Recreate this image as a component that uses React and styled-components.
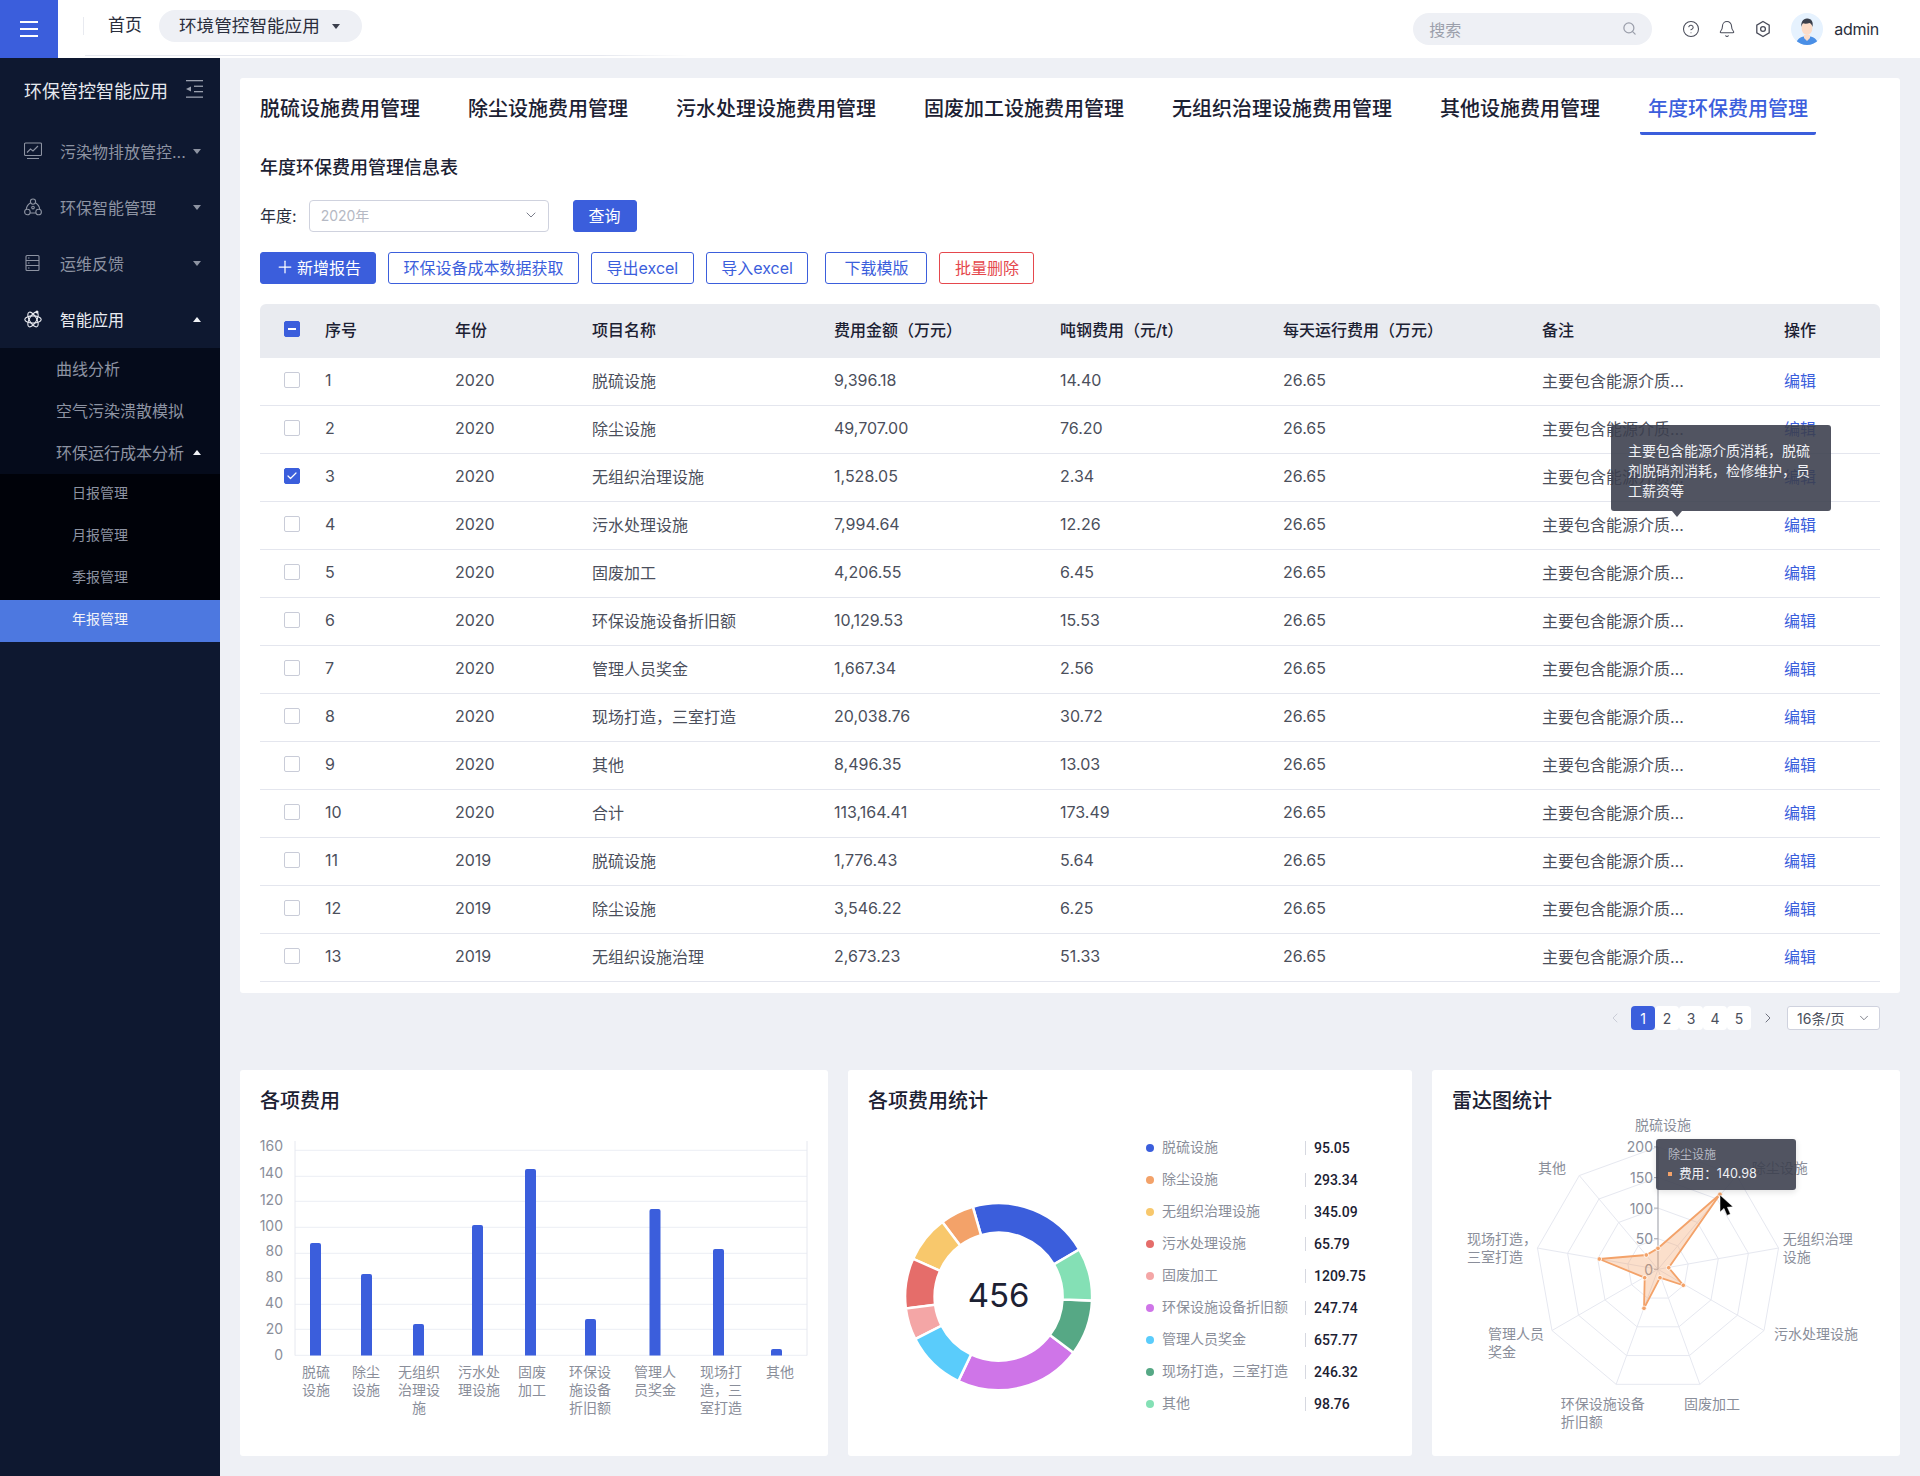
import styled, { createGlobalStyle } from "styled-components";
import { Search, Bell, CircleHelp, Plus, ChevronDown, ChevronLeft, ChevronRight, Check } from "lucide-react";

const BLUE = "#3b5edc";
const ORANGE = "#f3a269";

const tabs = [
    "脱硫设施费用管理",
    "除尘设施费用管理",
    "污水处理设施费用管理",
    "固废加工设施费用管理",
    "无组织治理设施费用管理",
    "其他设施费用管理",
    "年度环保费用管理",
];

const rows = [
    [1, 2020, "脱硫设施", "9,396.18", "14.40"],
    [2, 2020, "除尘设施", "49,707.00", "76.20"],
    [3, 2020, "无组织治理设施", "1,528.05", "2.34"],
    [4, 2020, "污水处理设施", "7,994.64", "12.26"],
    [5, 2020, "固废加工", "4,206.55", "6.45"],
    [6, 2020, "环保设施设备折旧额", "10,129.53", "15.53"],
    [7, 2020, "管理人员奖金", "1,667.34", "2.56"],
    [8, 2020, "现场打造，三室打造", "20,038.76", "30.72"],
    [9, 2020, "其他", "8,496.35", "13.03"],
    [10, 2020, "合计", "113,164.41", "173.49"],
    [11, 2019, "脱硫设施", "1,776.43", "5.64"],
    [12, 2019, "除尘设施", "3,546.22", "6.25"],
    [13, 2019, "无组织设施治理", "2,673.23", "51.33"],
];

const REMARK = "主要包含能源介质消耗，脱硫剂脱硝剂消耗，检修维护，员工薪资等";

const bars = [
    { x: 310, top: 1243, label: ["脱硫", "设施"], cx: 316 },
    { x: 361, top: 1274, label: ["除尘", "设施"], cx: 366 },
    { x: 413, top: 1324, label: ["无组织", "治理设", "施"], cx: 419 },
    { x: 472, top: 1225, label: ["污水处", "理设施"], cx: 479 },
    { x: 525, top: 1169, label: ["固废", "加工"], cx: 532 },
    { x: 585, top: 1319, label: ["环保设", "施设备", "折旧额"], cx: 590 },
    { x: 649.5, top: 1209, label: ["管理人", "员奖金"], cx: 655 },
    { x: 713, top: 1249, label: ["现场打", "造，三", "室打造"], cx: 721 },
    { x: 771, top: 1349, label: ["其他"], cx: 780 },
];

const yTicks = [
    ["160", 1150.3, 1145],
    ["140", 1176.3, 1172],
    ["120", 1201.3, 1199],
    ["100", 1227.3, 1225],
    ["80", 1253.3, 1250],
    ["80", 1278.3, 1276],
    ["40", 1304.3, 1302],
    ["20", 1329.3, 1328],
    ["0", 1355.3, 1354],
];

const costs = [
    { name: "脱硫设施", value: "95.05", color: BLUE, from: 344, to: 419.7 },
    { name: "除尘设施", value: "293.34", color: ORANGE, from: 323, to: 344 },
    { name: "无组织治理设施", value: "345.09", color: "#f8c86c", from: 293.9, to: 323 },
    { name: "污水处理设施", value: "65.79", color: "#e56d6a", from: 262.7, to: 293.9 },
    { name: "固废加工", value: "1209.75", color: "#f4a6a6", from: 243, to: 262.7 },
    { name: "环保设施设备折旧额", value: "247.74", color: "#cf75e8", from: 126.8, to: 205.5 },
    { name: "管理人员奖金", value: "657.77", color: "#5accfb", from: 205.5, to: 243 },
    { name: "现场打造，三室打造", value: "246.32", color: "#56a885", from: 92.4, to: 126.8 },
    { name: "其他", value: "98.76", color: "#84e0b5", from: 59.7, to: 92.4 },
];

const polar = (cx, cy, r, deg) => {
    const a = (deg * Math.PI) / 180;
    return [cx + r * Math.sin(a), cy - r * Math.cos(a)];
};

const arcPath = (cx, cy, r0, r1, from, to) => {
    const [ax, ay] = polar(cx, cy, r1, from);
    const [bx, by] = polar(cx, cy, r1, to);
    const [c, d] = polar(cx, cy, r0, to);
    const [e, f] = polar(cx, cy, r0, from);
    const large = to - from > 180 ? 1 : 0;
    return `M${ax} ${ay}A${r1} ${r1} 0 ${large} 1 ${bx} ${by}L${c} ${d}A${r0} ${r0} 0 ${large} 0 ${e} ${f}Z`;
};

const RADAR_X = 1658;
const RADAR_Y = 1269.3;
const RADAR_STEP = 30.6;
const angles = Array.from({ length: 9 }, (_, i) => i * 40);

const ringPoints = (r) =>
    angles.map((a) => polar(RADAR_X, RADAR_Y, r, a).join(",")).join(" ");

const radarData = [
    [1658, 1248.3],
    [1720, 1194.3],
    [1668.7, 1267.7],
    [1683.3, 1285.3],
    [1660, 1277.7],
    [1644, 1308.3],
    [1644.7, 1277.7],
    [1599.3, 1259],
    [1646.3, 1255],
];

const radarLabels = [
    { x: 1635, y: 1124, lines: ["脱硫设施"] },
    { x: 1751.7, y: 1167, lines: ["除尘设施"] },
    { x: 1782.7, y: 1238, lines: ["无组织治理", "设施"] },
    { x: 1774, y: 1333, lines: ["污水处理设施"] },
    { x: 1684, y: 1403, lines: ["固废加工"] },
    { x: 1560.7, y: 1403, lines: ["环保设施设备", "折旧额"] },
    { x: 1488, y: 1333, lines: ["管理人员", "奖金"] },
    { x: 1467, y: 1238, lines: ["现场打造，", "三室打造"] },
    { x: 1538, y: 1167, lines: ["其他"] },
];

const GlobalStyle = createGlobalStyle`
    * { box-sizing: border-box; }
    html, body { margin: 0; padding: 0; }
    body {
        font-family: Inter, "Noto Sans CJK SC", sans-serif;
        background: #eef0f5;
        color: #1c2133;
    }
`;

const Page = styled.div`
    width: 1920px;
    height: 1476px;
    display: flex;
    flex-direction: column;
    overflow: hidden;
`;

const Header = styled.header`
    height: 58px;
    flex: none;
    background: #fff;
    display: flex;
    align-items: center;
    position: relative;
    padding-right: 41px;
    &::after {
        content: "";
        position: absolute;
        left: 85px;
        top: 55px;
        width: 607px;
        height: 1px;
        background: linear-gradient(90deg, #e6e8ef, #e6e8ef 85%, #fff);
    }
`;

const MenuButton = styled.div`
    width: 58px;
    height: 58px;
    background: ${BLUE};
    display: flex;
    align-items: center;
    justify-content: center;
`;

const Breadcrumb = styled.div`
    display: flex;
    align-items: center;
    margin-bottom: 6px;
`;

const Divider = styled.i`
    width: 1px;
    height: 18px;
    background: #e8eaf0;
    margin: 0 24px 0 25px;
`;

const Crumb = styled.span`
    font-size: 17px;
    line-height: 24px;
    margin-bottom: 2px;
    color: #2a2e3c;
`;

const CrumbPill = styled.div`
    margin-left: 17px;
    width: 203px;
    height: 32px;
    border-radius: 16px;
    background: #eef0f5;
    display: flex;
    align-items: center;
    padding: 0 0 3px 20px;
    gap: 12px;
    font-size: 17.6px;
    color: #2a2e3c;
    &::after {
        content: "";
        margin-top: 3px;
        border: 4px solid transparent;
        border-top: 5px solid #3a3e4c;
        border-bottom: 0;
    }
`;

const HeaderRight = styled.div`
    margin-left: auto;
    display: flex;
    align-items: center;
`;

const SearchBox = styled.div`
    width: 239px;
    height: 32px;
    border-radius: 16px;
    background: #eef0f5;
    display: flex;
    align-items: center;
    justify-content: space-between;
    padding: 0 15px 1px 16px;
    font-size: 16px;
    color: #9b9fab;
    margin-right: 30px;
`;

const IconGroup = styled.div`
    display: flex;
    gap: 18px;
    margin-right: 19px;
    color: #4a4d5a;
`;

const UserName = styled.span`
    margin-left: 11px;
    font-size: 16px;
    letter-spacing: -0.3px;
    color: #2a2e3c;
`;

const Body = styled.div`
    flex: 1;
    display: flex;
    min-height: 0;
`;

const Sidebar = styled.aside`
    width: 220px;
    flex: none;
    background: #0e1830;
`;

const SideTitle = styled.div`
    height: 66px;
    padding: 22px 17px 0 24px;
    display: flex;
    justify-content: space-between;
    align-items: flex-start;
    font-size: 18px;
    line-height: 24px;
    color: #e6e8ee;
`;

const SideItem = styled.div`
    height: 56px;
    display: flex;
    align-items: center;
    padding: 0 19.5px 2px 24px;
    font-size: 16px;
    color: ${(p) => (p.$active ? "#e9ebf1" : "#8d93a2")};
`;

const SideIcon = styled.span`
    width: 18px;
    height: 18px;
    margin-right: 18px;
    display: flex;
`;

const Caret = styled.i`
    margin-left: auto;
    width: 0;
    height: 0;
    border-left: 4px solid transparent;
    border-right: 4px solid transparent;
    ${(p) =>
        p.$up
            ? "border-bottom: 5px solid #f0f2f6;"
            : "border-top: 5px solid #8d93a2;"}
`;

const SubMenu = styled.div`
    background: #050b1b;
`;

const SubItem = styled.div`
    height: 42px;
    display: flex;
    align-items: center;
    padding: 0 19.5px 2px 56px;
    font-size: 16px;
    color: #8d93a2;
`;

const LeafMenu = styled.div`
    background: #000209;
`;

const LeafItem = styled.div`
    height: 42px;
    display: flex;
    align-items: center;
    padding: 0 0 6px 72px;
    font-size: 14px;
    color: ${(p) => (p.$active ? "#f1f3f8" : "#8d93a2")};
    background: ${(p) => (p.$active ? "#4d78e0" : "transparent")};
`;

const Main = styled.main`
    flex: 1;
    min-width: 0;
    padding: 20px;
`;

const TableCard = styled.section`
    height: 915px;
    background: #fff;
    border-radius: 3px;
    padding: 0 20px;
`;

const Tabs = styled.div`
    display: flex;
    gap: 32px;
    margin-left: -8px;
`;

const Tab = styled.div`
    padding: 19px 8px 11px;
    font-size: 20px;
    line-height: 24px;
    font-weight: 500;
    white-space: nowrap;
    color: ${(p) => (p.$active ? BLUE : "#1c2133")};
    border-bottom: 3px solid ${(p) => (p.$active ? BLUE : "transparent")};
    border-radius: 0 0 2px 2px;
`;

const SectionTitle = styled.h2`
    margin: 21px 0 0;
    font-size: 18px;
    line-height: 24px;
    font-weight: 500;
    color: #1c2133;
`;

const FilterRow = styled.div`
    margin-top: 20px;
    height: 32px;
    display: flex;
    align-items: center;
    font-size: 16px;
    color: #2a2e3c;
`;

const FilterLabel = styled.span`
    margin-bottom: 3px;
`;

const YearSelect = styled.div`
    margin-left: 12px;
    width: 240px;
    height: 32px;
    border: 1px solid #cfd2de;
    border-radius: 4px;
    display: flex;
    align-items: center;
    justify-content: space-between;
    padding: 0 9px 2px 11px;
    font-size: 14px;
    color: #b5b9c4;
`;

const SelectArrow = styled(ChevronDown)`
    color: #666a78;
`;

const Toolbar = styled.div`
    margin-top: 20px;
    display: flex;
    gap: 12px;
`;

const Button = styled.button`
    height: 32px;
    padding: 0 ${(p) => p.$pad || 14.5}px 2px;
    margin-left: ${(p) => p.$offset || 0}px;
    border-radius: 3px;
    font: inherit;
    font-size: 16px;
    display: flex;
    align-items: center;
    gap: ${(p) => p.$gap || 4}px;
    white-space: nowrap;
    cursor: pointer;
    border: 1px solid ${(p) => (p.$danger ? "#e5484d" : BLUE)};
    color: ${(p) => (p.$primary ? "#fff" : p.$danger ? "#e5484d" : BLUE)};
    background: ${(p) => (p.$primary ? BLUE : "#fff")};
`;

const QueryButton = styled(Button)`
    margin-left: 24px;
    width: 64px;
    justify-content: center;
`;

const Table = styled.div`
    margin-top: 20px;
    position: relative;
`;

const columns = "65px 130px 137px 242px 226px 223px 259px 242px 1fr";

const HeadRow = styled.div`
    height: 54px;
    display: grid;
    grid-template-columns: ${columns};
    align-items: center;
    padding-bottom: 5px;
    background: #e9ebf0;
    border-radius: 6px 6px 0 0;
    font-size: 16px;
    font-weight: 500;
    color: #1c2133;
`;

const Row = styled.div`
    height: 48px;
    display: grid;
    grid-template-columns: ${columns};
    align-items: center;
    padding-bottom: 3px;
    border-bottom: 1px solid #e4e6ee;
    font-size: 16px;
    color: #4b4f5c;
`;

const CheckCell = styled.div`
    padding-left: 24px;
    display: flex;
`;

const Box = styled.span`
    width: 16px;
    height: 16px;
    border-radius: 2px;
    display: flex;
    align-items: center;
    justify-content: center;
    color: #fff;
    border: 1px solid ${(p) => (p.$on ? BLUE : "#c9ccd8")};
    background: ${(p) => (p.$on ? BLUE : "#fff")};
`;

const Dash = styled.i`
    width: 8px;
    height: 2px;
    background: #fff;
`;

const Remark = styled.div`
    width: 147px;
    white-space: nowrap;
    overflow: hidden;
    text-overflow: ellipsis;
`;

const EditLink = styled.a`
    color: ${BLUE};
`;

const RowTip = styled.div`
    position: absolute;
    left: 1351px;
    top: 121px;
    width: 220px;
    padding: 16px 17px 10px;
    border-radius: 3px;
    background: rgba(60, 63, 78, 0.89);
    color: #f0f1f5;
    font-size: 14px;
    line-height: 20px;
    &::after {
        content: "";
        position: absolute;
        left: 61px;
        top: 100%;
        border: 5px solid transparent;
        border-top: 6px solid rgba(60, 63, 78, 0.89);
        border-bottom: 0;
    }
`;

const Pager = styled.div`
    margin-top: 13px;
    height: 24px;
    padding-right: 20px;
    display: flex;
    justify-content: flex-end;
    align-items: center;
    font-size: 14px;
    color: #4b4f5c;
`;

const PageNum = styled.div`
    width: 24px;
    height: 24px;
    border-radius: 4px;
    display: flex;
    align-items: center;
    justify-content: center;
    background: ${(p) => (p.$active ? BLUE : "#fff")};
    color: ${(p) => (p.$active ? "#fff" : "#4b4f5c")};
`;

const PageArrow = styled.div`
    display: flex;
    color: ${(p) => (p.$off ? "#c4c7d2" : "#5a5e6c")};
    margin: ${(p) => (p.$off ? "0 8px 0 0" : "0 11px 0 9px")};
`;

const SizeSelect = styled.div`
    width: 93px;
    height: 24px;
    background: #fff;
    border: 1px solid #cfd2de;
    border-radius: 3px;
    display: flex;
    align-items: center;
    justify-content: space-between;
    padding: 0 8px 0 9px;
`;

const Charts = styled.div`
    margin-top: 40px;
    display: grid;
    grid-template-columns: 588px 564px 468px;
    gap: 20px;
`;

const Card = styled.section`
    height: 386px;
    background: #fff;
    border-radius: 3px;
    position: relative;
`;

const CardTitle = styled.h3`
    margin: 0;
    padding: 19px 0 0 20px;
    height: 42px;
    font-size: 20px;
    line-height: 24px;
    font-weight: 500;
    color: #1c2133;
`;

const DonutBody = styled.div`
    display: flex;
`;

const ChartSvg = styled.svg`
    display: block;
    flex: none;
`;

const AxisText = styled.text`
    font-size: 14px;
    fill: #8a8e9a;
`;

const CenterText = styled.text`
    font-size: 33px;
    fill: #1c2133;
`;

const Legend = styled.div`
    padding-top: 20px;
`;

const LegendRow = styled.div`
    height: 32px;
    display: flex;
    align-items: center;
    font-size: 14px;
    color: #8a8e9a;
`;

const LegendDot = styled.i`
    width: 8px;
    height: 8px;
    border-radius: 50%;
    margin-right: 8px;
    background: ${(p) => p.$color};
`;

const LegendName = styled.span`
    width: 143px;
    margin-top: -5px;
`;

const LegendValue = styled.span`
    border-left: 1px solid #d6d8e0;
    padding-left: 8px;
    line-height: 14px;
    font-family: Roboto, sans-serif;
    font-weight: 500;
    color: #1c2133;
`;

const ChartTip = styled.div`
    position: absolute;
    left: 224px;
    top: 69px;
    width: 140px;
    height: 51px;
    padding: 8px 12px;
    border-radius: 3px;
    background: rgba(60, 63, 78, 0.89);
    box-shadow: 0 2px 6px rgba(0, 0, 0, 0.12);
    font-size: 12px;
    line-height: 16px;
    color: #b7bac4;
`;

const TipLine = styled.div`
    margin-top: 2px;
    display: flex;
    align-items: center;
    color: #f0f1f5;
    font-size: 12.6px;
    line-height: 18px;
    white-space: nowrap;
    &::before {
        content: "";
        width: 4px;
        height: 4px;
        margin-right: 7px;
        background: ${ORANGE};
    }
`;

const MenuIcon = () => (
    <svg width="18" height="18" viewBox="0 0 18 18" fill="#fff">
        <rect y="1" width="18" height="2" />
        <rect y="8" width="18" height="2" />
        <rect y="15" width="18" height="2" />
    </svg>
);

const HexIcon = () => (
    <svg width="18" height="18" viewBox="0 0 18 18" fill="none" stroke="currentColor" strokeWidth="1.3">
        <path d="M9 1.5l6.2 3.6v7.8L9 16.5l-6.2-3.6V5.1z" />
        <circle cx="9" cy="9" r="2.4" />
    </svg>
);

const Avatar = () => (
    <svg width="32" height="32" viewBox="0 0 32 32">
        <clipPath id="face-clip">
            <circle cx="16" cy="16" r="16" />
        </clipPath>
        <g clipPath="url(#face-clip)">
            <rect width="32" height="32" fill="#e6f2fe" />
            <path d="M5 32c0-5 4-8 8-8.5h6c4 .5 8 3.5 8 8.5z" fill="#4a8fe6" />
            <path d="M13 22h6v3l-3 3-3-3z" fill="#fbdcc8" />
            <ellipse cx="16" cy="15" rx="5.4" ry="7" fill="#fbdcc8" />
            <path d="M10.5 14c-1-5 2-9 6-8.5 4 0 6 3.5 5 8.5-.5-2-1.5-3.5-3-4-2 .8-5 .8-6.5.3-.8 1-1.3 2-1.5 3.7z" fill="#3a3f4b" />
        </g>
    </svg>
);

const CollapseIcon = () => (
    <svg width="17" height="18" viewBox="0 0 17 18" fill="#9aa0ae">
        <rect y="0" width="17" height="1.3" />
        <rect x="8" y="5.6" width="9" height="1.3" />
        <rect x="8" y="11" width="9" height="1.3" />
        <rect y="16.5" width="17" height="1.3" />
        <path d="M0 9l5-2.5v5z" />
    </svg>
);

const MonitorIcon = () => (
    <svg width="18" height="18" viewBox="0 0 18 18" fill="none" stroke="#8d93a2" strokeWidth="1.1">
        <rect x=".5" y="1" width="17" height="12.5" rx="1" />
        <path d="M3 10.5l3.5-3.5 2.5 2 5-5M3 16.5h12" />
    </svg>
);

const CirclesIcon = () => (
    <svg width="18" height="18" viewBox="0 0 18 18" fill="none" stroke="#8d93a2" strokeWidth="1.1">
        <circle cx="9" cy="3.6" r="2.6" />
        <circle cx="3.4" cy="14" r="2.8" />
        <circle cx="14.6" cy="14" r="2.8" />
        <circle cx="9" cy="9.6" r="1.3" />
        <path d="M6.6 4.8C4 6.5 2.5 8.7 2.3 11.3M11.4 4.8c2.6 1.7 4.1 3.9 4.3 6.5M6.2 15h5.6" />
    </svg>
);

const ListIcon = () => (
    <svg width="18" height="18" viewBox="0 0 18 18" fill="none" stroke="#8d93a2" strokeWidth="1.1">
        <rect x="2" y="1.5" width="13" height="15" rx="1" />
        <path d="M2 6.5h13M2 11.5h13M4 4h1.5M4 9h1.5M4 14h1.5" />
    </svg>
);

const AtomIcon = () => (
    <svg width="18" height="18" viewBox="0 0 18 18" fill="none" stroke="#e9ebf1" strokeWidth="1.1">
        <ellipse cx="9" cy="9.5" rx="8.2" ry="3.6" />
        <ellipse cx="9" cy="9.5" rx="8.2" ry="3.6" transform="rotate(60 9 9.5)" />
        <ellipse cx="9" cy="9.5" rx="8.2" ry="3.6" transform="rotate(120 9 9.5)" />
        <circle cx="13" cy="2" r="1.5" fill="#e9ebf1" stroke="none" />
    </svg>
);

const BarChart = () => (
    <ChartSvg width="588" height="344" viewBox="240 1112 588 344">
        {yTicks.map(([label, line, text], i) => (
            <g key={i}>
                <line x1="295" x2="807" y1={line} y2={line} stroke="#eceef4" />
                <AxisText x="283" y={text} textAnchor="end" dominantBaseline="central">
                    {label}
                </AxisText>
            </g>
        ))}
        <line x1="295" x2="295" y1="1141" y2="1355.5" stroke="#e6e8ef" />
        <line x1="807" x2="807" y1="1141" y2="1355.5" stroke="#e6e8ef" />
        {bars.map((bar) => (
            <g key={bar.x}>
                <path
                    d={`M${bar.x} 1355.5V${bar.top + 2}q0-2 2-2h7q2 0 2 2V1355.5z`}
                    fill={BLUE}
                />
                {bar.label.map((text, i) => (
                    <AxisText key={i} x={bar.cx} y={1371 + i * 18} textAnchor="middle" dominantBaseline="central">
                        {text}
                    </AxisText>
                ))}
            </g>
        ))}
    </ChartSvg>
);

const DonutChart = () => (
    <ChartSvg width="298" height="344" viewBox="848 1112 298 344">
        {costs.map((item) => (
            <path
                key={item.name}
                d={arcPath(998.6, 1296.7, 64, 93.5, item.from, item.to)}
                fill={item.color}
                stroke="#fff"
                strokeWidth="2.5"
            />
        ))}
        <CenterText x="998.6" y="1295" textAnchor="middle" dominantBaseline="central">
            456
        </CenterText>
    </ChartSvg>
);

const RadarChart = () => (
    <ChartSvg width="468" height="344" viewBox="1432 1112 468 344">
        {[1, 2, 3, 4].map((k) => (
            <polygon key={k} points={ringPoints(k * RADAR_STEP)} fill="none" stroke="#e6e8f0" />
        ))}
        {angles.slice(1).map((a) => {
            const [x, y] = polar(RADAR_X, RADAR_Y, 4 * RADAR_STEP, a);
            return <line key={a} x1={RADAR_X} y1={RADAR_Y} x2={x} y2={y} stroke="#e6e8f0" />;
        })}
        <line x1={RADAR_X} x2={RADAR_X} y1={RADAR_Y} y2={RADAR_Y - 4 * RADAR_STEP} stroke="#a9abb3" strokeWidth="1.2" />
        {["0", "50", "100", "150", "200"].map((label, i) => (
            <g key={label}>
                <line x1="1654" x2={RADAR_X} y1={RADAR_Y - i * RADAR_STEP} y2={RADAR_Y - i * RADAR_STEP} stroke="#a9abb3" />
                <AxisText x="1653" y={RADAR_Y - i * RADAR_STEP} textAnchor="end" dominantBaseline="central">
                    {label}
                </AxisText>
            </g>
        ))}
        {radarLabels.map((item) =>
            item.lines.map((text, i) => (
                <AxisText key={text} x={item.x} y={item.y + i * 18} dominantBaseline="central">
                    {text}
                </AxisText>
            ))
        )}
        <polygon
            points={radarData.map((p) => p.join(",")).join(" ")}
            fill="rgba(243,162,105,0.35)"
            stroke={ORANGE}
            strokeWidth="1.8"
            strokeLinejoin="miter"
        />
        {radarData.map(([x, y], i) => (
            <circle key={i} cx={x} cy={y} r="2.3" fill={ORANGE} stroke="#fff" strokeWidth="0.8" />
        ))}
        <path d="M1720 1195v17l4-3.6 3 7 3.4-1.4-3-6.8 5.6-.4z" fill="#000" stroke="#fff" strokeWidth=".5" />
    </ChartSvg>
);

const App = () => {
    return (
        <Page>
            <GlobalStyle />
            <Header>
                <MenuButton>
                    <MenuIcon />
                </MenuButton>
                <Breadcrumb>
                    <Divider />
                    <Crumb>首页</Crumb>
                    <CrumbPill>环境管控智能应用</CrumbPill>
                </Breadcrumb>
                <HeaderRight>
                    <SearchBox>
                        搜索
                        <Search size={15} color="#9b9fab" />
                    </SearchBox>
                    <IconGroup>
                        <CircleHelp size={18} strokeWidth={1.4} />
                        <Bell size={18} strokeWidth={1.4} />
                        <HexIcon />
                    </IconGroup>
                    <Avatar />
                    <UserName>admin</UserName>
                </HeaderRight>
            </Header>
            <Body>
                <Sidebar>
                    <SideTitle>
                        环保管控智能应用
                        <CollapseIcon />
                    </SideTitle>
                    <SideItem>
                        <SideIcon><MonitorIcon /></SideIcon>
                        污染物排放管控...
                        <Caret />
                    </SideItem>
                    <SideItem>
                        <SideIcon><CirclesIcon /></SideIcon>
                        环保智能管理
                        <Caret />
                    </SideItem>
                    <SideItem>
                        <SideIcon><ListIcon /></SideIcon>
                        运维反馈
                        <Caret />
                    </SideItem>
                    <SideItem $active>
                        <SideIcon><AtomIcon /></SideIcon>
                        智能应用
                        <Caret $up />
                    </SideItem>
                    <SubMenu>
                        <SubItem>曲线分析</SubItem>
                        <SubItem>空气污染溃散模拟</SubItem>
                        <SubItem>
                            环保运行成本分析
                            <Caret $up />
                        </SubItem>
                        <LeafMenu>
                            <LeafItem>日报管理</LeafItem>
                            <LeafItem>月报管理</LeafItem>
                            <LeafItem>季报管理</LeafItem>
                            <LeafItem $active>年报管理</LeafItem>
                        </LeafMenu>
                    </SubMenu>
                </Sidebar>
                <Main>
                    <TableCard>
                        <Tabs>
                            {tabs.map((tab, i) => (
                                <Tab key={tab} $active={i === tabs.length - 1}>{tab}</Tab>
                            ))}
                        </Tabs>
                        <SectionTitle>年度环保费用管理信息表</SectionTitle>
                        <FilterRow>
                            <FilterLabel>年度:</FilterLabel>
                            <YearSelect>
                                2020年
                                <SelectArrow size={16} strokeWidth={1.3} />
                            </YearSelect>
                            <QueryButton $primary>查询</QueryButton>
                        </FilterRow>
                        <Toolbar>
                            <Button $primary $pad={14} $gap={2}>
                                <Plus size={20} strokeWidth={1.5} />
                                新增报告
                            </Button>
                            <Button>环保设备成本数据获取</Button>
                            <Button>导出excel</Button>
                            <Button>导入excel</Button>
                            <Button $pad={18} $offset={5}>下载模版</Button>
                            <Button $danger>批量删除</Button>
                        </Toolbar>
                        <Table>
                            <HeadRow>
                                <CheckCell>
                                    <Box $on><Dash /></Box>
                                </CheckCell>
                                <div>序号</div>
                                <div>年份</div>
                                <div>项目名称</div>
                                <div>费用金额（万元）</div>
                                <div>吨钢费用（元/t）</div>
                                <div>每天运行费用（万元）</div>
                                <div>备注</div>
                                <div>操作</div>
                            </HeadRow>
                            {rows.map(([no, year, name, amount, perTon]) => (
                                <Row key={no}>
                                    <CheckCell>
                                        <Box $on={no === 3}>
                                            {no === 3 && <Check size={12} strokeWidth={2.4} />}
                                        </Box>
                                    </CheckCell>
                                    <div>{no}</div>
                                    <div>{year}</div>
                                    <div>{name}</div>
                                    <div>{amount}</div>
                                    <div>{perTon}</div>
                                    <div>26.65</div>
                                    <Remark>{REMARK}</Remark>
                                    <EditLink>编辑</EditLink>
                                </Row>
                            ))}
                            <RowTip>{REMARK}</RowTip>
                        </Table>
                    </TableCard>
                    <Pager>
                        <PageArrow $off><ChevronLeft size={16} strokeWidth={1.3} /></PageArrow>
                        {[1, 2, 3, 4, 5].map((n) => (
                            <PageNum key={n} $active={n === 1}>{n}</PageNum>
                        ))}
                        <PageArrow><ChevronRight size={16} strokeWidth={1.3} /></PageArrow>
                        <SizeSelect>
                            16条/页
                            <ChevronDown size={14} strokeWidth={1.2} />
                        </SizeSelect>
                    </Pager>
                    <Charts>
                        <Card>
                            <CardTitle>各项费用</CardTitle>
                            <BarChart />
                        </Card>
                        <Card>
                            <CardTitle>各项费用统计</CardTitle>
                            <DonutBody>
                                <DonutChart />
                                <Legend>
                                    {costs.map((item) => (
                                        <LegendRow key={item.name}>
                                            <LegendDot $color={item.color} />
                                            <LegendName>{item.name}</LegendName>
                                            <LegendValue>{item.value}</LegendValue>
                                        </LegendRow>
                                    ))}
                                </Legend>
                            </DonutBody>
                        </Card>
                        <Card>
                            <CardTitle>雷达图统计</CardTitle>
                            <RadarChart />
                            <ChartTip>
                                除尘设施
                                <TipLine>费用：140.98</TipLine>
                            </ChartTip>
                        </Card>
                    </Charts>
                </Main>
            </Body>
        </Page>
    );
};

export default App;
